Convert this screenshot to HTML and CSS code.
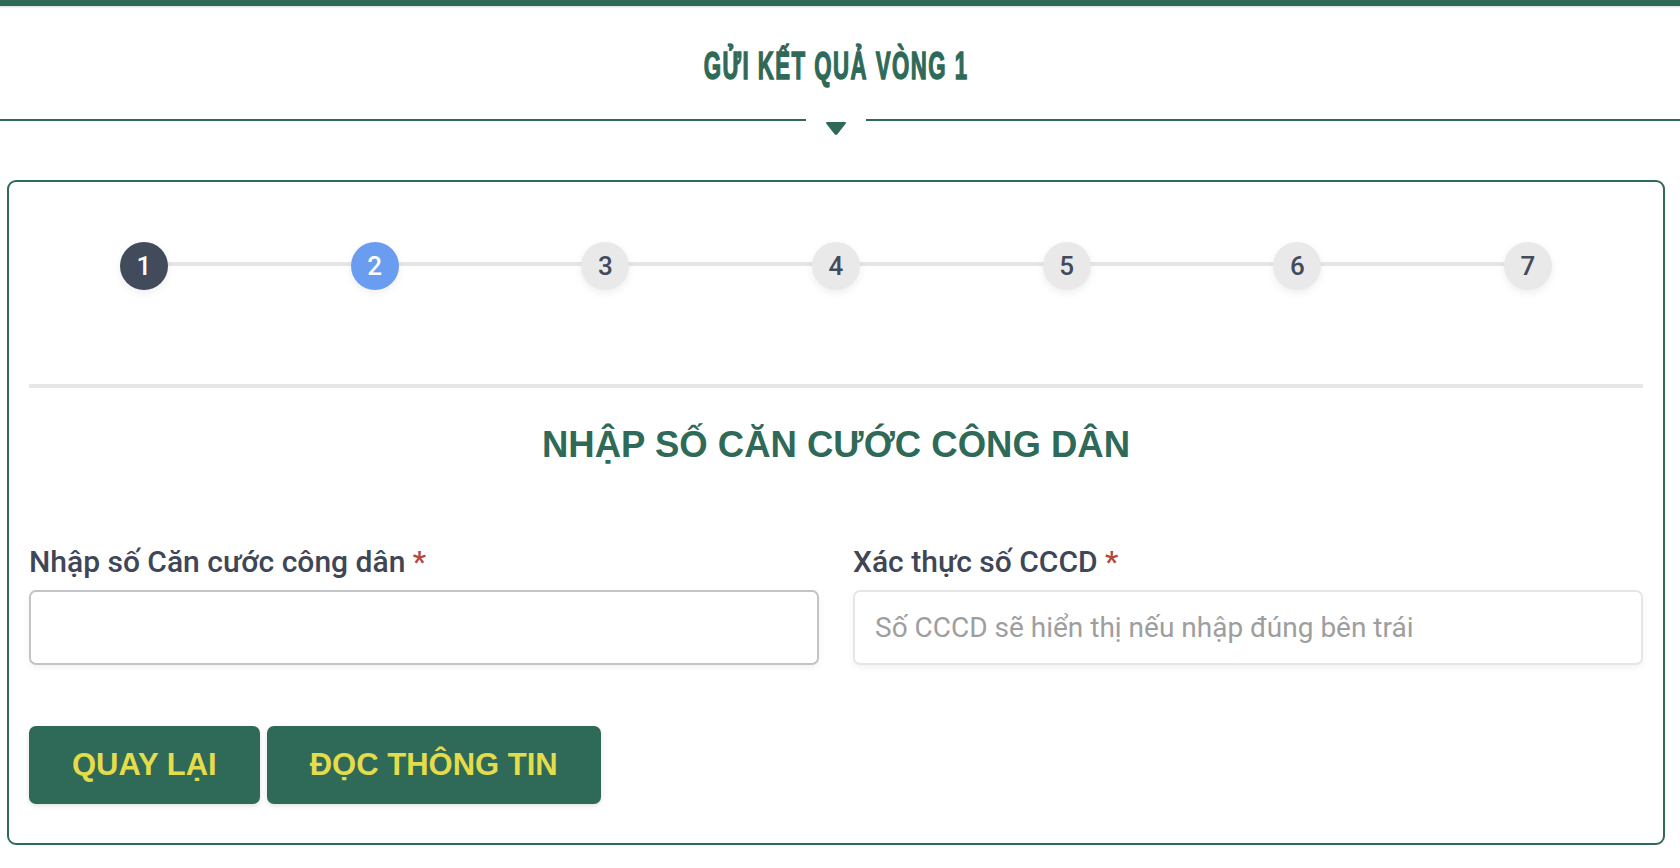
FILE: index.html
```html
<!DOCTYPE html>
<html lang="vi">
<head>
<meta charset="utf-8">
<title>Gửi kết quả vòng 1</title>
<link rel="stylesheet" href="styles.css">
</head>
<body>
<div class="topbar"></div>
<div class="page">
  <div class="page-title">
    <h1 class="title-text">GỬI KẾT QUẢ VÒNG 1</h1>
  </div>
  <div class="rule">
    <div class="rule-line"></div>
    <div class="rule-gap">
      <svg class="caret" width="22" height="14" viewBox="0 0 22 14" aria-hidden="true">
        <path d="M2.2 0 H19.8 Q22 0 20.6 1.8 L12.4 12.3 Q11 13.9 9.6 12.3 L1.4 1.8 Q0 0 2.2 0 Z" fill="#2f6957"/>
      </svg>
    </div>
    <div class="rule-line rule-line-right"></div>
  </div>

  <section class="card">
    <div class="steps">
      <div class="step step-done">1</div>
      <div class="step step-active">2</div>
      <div class="step">3</div>
      <div class="step">4</div>
      <div class="step">5</div>
      <div class="step">6</div>
      <div class="step">7</div>
    </div>

    <div class="divider"></div>

    <h2 class="section-title">NHẬP SỐ CĂN CƯỚC CÔNG DÂN</h2>

    <div class="form-grid">
      <div class="field">
        <label class="field-label" for="cccd">Nhập số Căn cước công dân <span class="req">*</span></label>
        <input class="field-input" id="cccd" type="text">
      </div>
      <div class="field">
        <label class="field-label" for="cccd2">Xác thực số CCCD <span class="req">*</span></label>
        <input class="field-input field-input-readonly" id="cccd2" type="text" placeholder="Số CCCD sẽ hiển thị nếu nhập đúng bên trái" readonly>
      </div>
    </div>

    <div class="actions">
      <button class="btn" type="button">QUAY LẠI</button>
      <button class="btn" type="button">ĐỌC THÔNG TIN</button>
    </div>
  </section>
</div>
</body>
</html>
```

FILE: styles.css
```css
* { box-sizing: border-box; }

html, body {
  margin: 0;
  padding: 0;
  background: #ffffff;
  font-family: Roboto, "Noto Sans", Arial, sans-serif;
  overflow: hidden;
}

.topbar {
  height: 6px;
  background: #2f6957;
  box-shadow: 0 1.5px 0 #e4e4e4;
  position: relative;
  z-index: 2;
}

.page {
  width: 1672px;
}

.page-title {
  height: 113px;
  padding-top: 38px;
  text-align: center;
}

.title-text {
  display: inline-block;
  margin: 0;
  font-family: "Liberation Sans", Arial, sans-serif;
  font-weight: 700;
  font-size: 38px;
  line-height: 44px;
  letter-spacing: 2.5px;
  color: #2f6957;
  -webkit-text-stroke: 1.4px #2f6957;
  transform: scaleX(0.585);
  transform-origin: center;
  white-space: nowrap;
}

.rule {
  display: flex;
  align-items: flex-start;
  margin-right: -8px;
}

.rule-line {
  flex: 1 1 0;
  height: 2px;
  background: #2f6957;
}

.rule-line-right {
  flex-basis: 8px;
}

.rule-gap {
  width: 60px;
  flex: none;
  display: flex;
  justify-content: center;
  padding-top: 3px;
}

.caret {
  display: block;
}

.card {
  margin: 44px 7px 0;
  border: 2px solid #2f6957;
  border-radius: 9px;
  padding: 60px 20px 39px 20px;
}

.steps {
  position: relative;
  display: flex;
  justify-content: space-between;
  margin: 0 91px;
}

.steps::before {
  content: "";
  position: absolute;
  left: 24px;
  right: 24px;
  top: 20px;
  height: 4px;
  background: #e6e6e6;
}

.step {
  position: relative;
  z-index: 1;
  width: 48px;
  height: 48px;
  border-radius: 50%;
  background: #e9e9e9;
  color: #424b5b;
  display: flex;
  align-items: center;
  justify-content: center;
  font-size: 26px;
  font-weight: 500;
  box-shadow: 0 3px 8px rgba(0, 0, 0, 0.07);
}

.step-done {
  background: #424b5b;
  color: #ffffff;
}

.step-active {
  background: #6a9cf0;
  color: #ffffff;
}

.divider {
  margin-top: 94px;
  height: 4px;
  background: #e7e7e7;
}

.section-title {
  margin: 36px 0 0;
  text-align: center;
  font-family: "Liberation Sans", Arial, sans-serif;
  font-weight: 700;
  font-size: 36.5px;
  line-height: 42px;
  color: #2f6957;
}

.form-grid {
  margin-top: 79px;
  display: grid;
  grid-template-columns: 1fr 1fr;
  column-gap: 34px;
}

.field-label {
  display: block;
  font-size: 30px;
  line-height: 34px;
  font-weight: 500;
  color: #3f4656;
  margin-bottom: 11px;
}

.req {
  color: #b5473d;
}

.field-input {
  display: block;
  width: 100%;
  height: 75px;
  border: 2px solid #c3c4c8;
  border-radius: 7px;
  padding: 0 20px;
  font-family: Roboto, "Noto Sans", sans-serif;
  font-size: 28px;
  color: #3f4656;
  background: #ffffff;
  box-shadow: 0 3px 6px rgba(0, 0, 0, 0.05);
  outline: none;
}

.field-input-readonly {
  border-color: #e6e6e6;
}

.field-input::placeholder {
  color: #9e9e9e;
}

.actions {
  margin-top: 61px;
  display: flex;
  gap: 7px;
}

.btn {
  height: 78px;
  padding: 0 43px;
  border: none;
  border-radius: 7px;
  background: #2f6957;
  color: #e4dc4b;
  font-family: "Liberation Sans", Arial, sans-serif;
  font-weight: 700;
  font-size: 31px;
  box-shadow: 0 2px 5px rgba(0, 0, 0, 0.12);
  cursor: pointer;
}
```
